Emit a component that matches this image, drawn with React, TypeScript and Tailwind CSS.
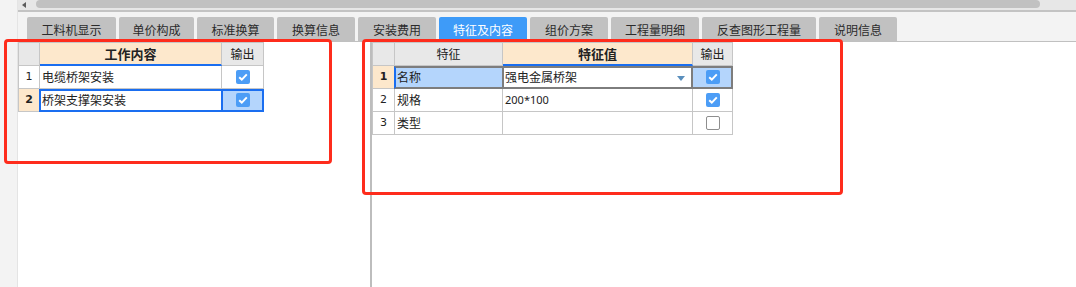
import React from "react";

const cjk = "font-['Noto_Sans_CJK_SC',sans-serif]";
const num = "font-['DejaVu_Sans',sans-serif]";

const tabs: { label: string; w: string; active?: boolean }[] = [
  { label: "工料机显示", w: "w-[89px]" },
  { label: "单价构成", w: "w-[75px]" },
  { label: "标准换算", w: "w-[77px]" },
  { label: "换算信息", w: "w-[78px]" },
  { label: "安装费用", w: "w-[78px]" },
  { label: "特征及内容", w: "w-[88px]", active: true },
  { label: "组价方案", w: "w-[78px]" },
  { label: "工程量明细", w: "w-[88px]" },
  { label: "反查图形工程量", w: "w-[114px]" },
  { label: "说明信息", w: "w-[78px]" },
];

function Box({ on }: { on: boolean }) {
  if (!on) {
    return <span className="block h-[14px] w-[14px] rounded-[2px] border border-[#8e8e8e] bg-white" />;
  }
  return (
    <span className="flex h-[14px] w-[14px] items-center justify-center rounded-[2px] bg-[#4c9df6]">
      <svg width="10" height="8" viewBox="0 0 10 8">
        <path d="M1.2 4.2 3.8 6.6 8.8 1.4" fill="none" stroke="#fff" strokeWidth="2" />
      </svg>
    </span>
  );
}

const cell = "relative box-border h-[23px] border-r border-b border-[#c6c6c6] flex items-center";

function WorkTable() {
  const rows = [
    { n: "1", text: "电缆桥架安装", sel: false },
    { n: "2", text: "桥架支撑架安装", sel: true },
  ];
  return (
    <div className={`w-fit border-l border-t border-[#c6c6c6] text-[12px] text-[#222] ${cjk}`}>
      <div className="flex">
        <div className={`${cell} w-[21px] bg-[#e8e8e8]`} />
        <div className={`${cell} w-[182px] justify-center bg-[#fde8cc] border-b-2 border-b-[#1a6ef0] text-[13px] font-bold`}>
          工作内容
        </div>
        <div className={`${cell} w-[42px] justify-center bg-[#e8e8e8]`}>输出</div>
      </div>
      {rows.map((r) => (
        <div key={r.n} className="flex">
          <div
            className={`${cell} w-[21px] justify-center text-[11px] ${num} ${
              r.sel ? "bg-[#fde8cc] font-bold" : "bg-white"
            }`}
          >
            {r.n}
          </div>
          <div className={`${cell} w-[182px] pl-[2px] bg-white`}>
            {r.text}
            {r.sel && (
              <span className="absolute top-0 -left-px -right-px -bottom-px border-y-2 border-l-2 border-[#1a6ef0]" />
            )}
          </div>
          <div className={`${cell} w-[42px] justify-center ${r.sel ? "bg-[#b4d5fc]" : "bg-white"}`}>
            <Box on />
            {r.sel && <span className="absolute top-0 -left-px -right-px -bottom-px border-2 border-[#1a6ef0]" />}
          </div>
        </div>
      ))}
    </div>
  );
}

function FeatureTable() {
  const rows = [
    { n: "1", k: "名称", v: "强电金属桥架", on: true, sel: true },
    { n: "2", k: "规格", v: "200*100", on: true, sel: false },
    { n: "3", k: "类型", v: "", on: false, sel: false },
  ];
  return (
    <div className={`w-fit border-l border-t border-[#c6c6c6] text-[12px] text-[#222] ${cjk}`}>
      <div className="flex">
        <div className={`${cell} w-[22px] bg-[#e8e8e8]`} />
        <div className={`${cell} w-[108px] justify-center bg-[#e8e8e8]`}>特征</div>
        <div className={`${cell} w-[190px] justify-center bg-[#fde8cc] border-b-2 border-b-[#1a6ef0] text-[13px] font-bold`}>
          特征值
        </div>
        <div className={`${cell} w-[40px] justify-center bg-[#e8e8e8]`}>输出</div>
      </div>
      {rows.map((r) => (
        <div key={r.n} className="flex">
          <div
            className={`${cell} w-[22px] justify-center text-[11px] ${num} ${
              r.sel ? "bg-[#fde8cc] font-bold" : "bg-white"
            }`}
          >
            {r.n}
          </div>
          <div className={`${cell} w-[108px] pl-[2px] ${r.sel ? "bg-[#b4d5fc]" : "bg-white"}`}>
            {r.k}
            {r.sel && (
              <span className="absolute top-0 -left-px right-0 -bottom-px border-y-2 border-l-2 border-y-[#7d7d7d] border-l-[#1a6ef0]" />
            )}
          </div>
          <div className={`${cell} w-[190px] pl-[2px] bg-white`}>
            {r.v === "200*100" ? (
              <span className="font-['Noto_Sans',sans-serif] text-[11px]">{r.v}</span>
            ) : (
              r.v
            )}
            {r.sel && (
              <>
                <span className="absolute top-0 -left-px -right-px -bottom-px border-2 border-[#7d7d7d]" />
                <svg className="absolute right-[7px] top-[10px]" width="8" height="5" viewBox="0 0 8 5">
                  <path d="M0 0H8L4 5Z" fill="#5a8fbd" />
                </svg>
              </>
            )}
          </div>
          <div className={`${cell} w-[40px] justify-center ${r.sel ? "bg-[#b4d5fc]" : "bg-white"}`}>
            <Box on={r.on} />
            {r.sel && (
              <span className="absolute top-0 left-0 -right-px -bottom-px border-y-2 border-r-2 border-[#7d7d7d]" />
            )}
          </div>
        </div>
      ))}
    </div>
  );
}

export default function App() {
  return (
    <div className="relative flex h-[287px] w-[1076px] overflow-hidden bg-white">
      <div className="h-full w-[18px] shrink-0 border-r border-[#e4e4e4] bg-[#f3f3f3]" />

      <div className="flex min-w-0 flex-1 flex-col">
        {/* horizontal scrollbar */}
        <div className="box-content flex h-[10px] items-start border-b-2 border-[#c3c3c3] bg-[#e7e7e7]">
          <svg className="ml-[4px] mt-[2px]" width="4" height="6" viewBox="0 0 4 6">
            <path d="M4 0V6L0 3Z" fill="#5c5c5c" />
          </svg>
          <div className="ml-[10px] h-[8px] w-[1004px] rounded-[4px] bg-[#c1c1c1]" />
        </div>

        {/* tab bar */}
        <div className={`box-content flex h-[29px] items-end gap-[3px] border-b border-[#c0c0c0] bg-[#f3f3f3] pl-[9px] ${cjk}`}>
          {tabs.map((t) => (
            <div
              key={t.label}
              className={`${t.w} flex h-[24px] items-center justify-center rounded-t-[2px] pt-[1px] text-[12px] ${
                t.active ? "bg-[#3e9bf8] text-white" : "bg-[#c1c1c1] text-[#2b2b2b]"
              }`}
            >
              {t.label}
            </div>
          ))}
        </div>

        {/* content */}
        <div className="flex flex-1">
          <div className="w-[352px] shrink-0">
            <WorkTable />
          </div>
          <div className="w-[2px] shrink-0 bg-[#bdbdbd]" />
          <div className="flex-1">
            <FeatureTable />
          </div>
        </div>
      </div>

      {/* red annotation frames */}
      <div className="pointer-events-none absolute left-[4px] top-[39px] h-[125px] w-[328px] rounded-[4px] border-[3px] border-[#fe2c1c]" />
      <div className="pointer-events-none absolute left-[362px] top-[39px] h-[156px] w-[481px] rounded-[4px] border-[3px] border-[#fe2c1c]" />
    </div>
  );
}
